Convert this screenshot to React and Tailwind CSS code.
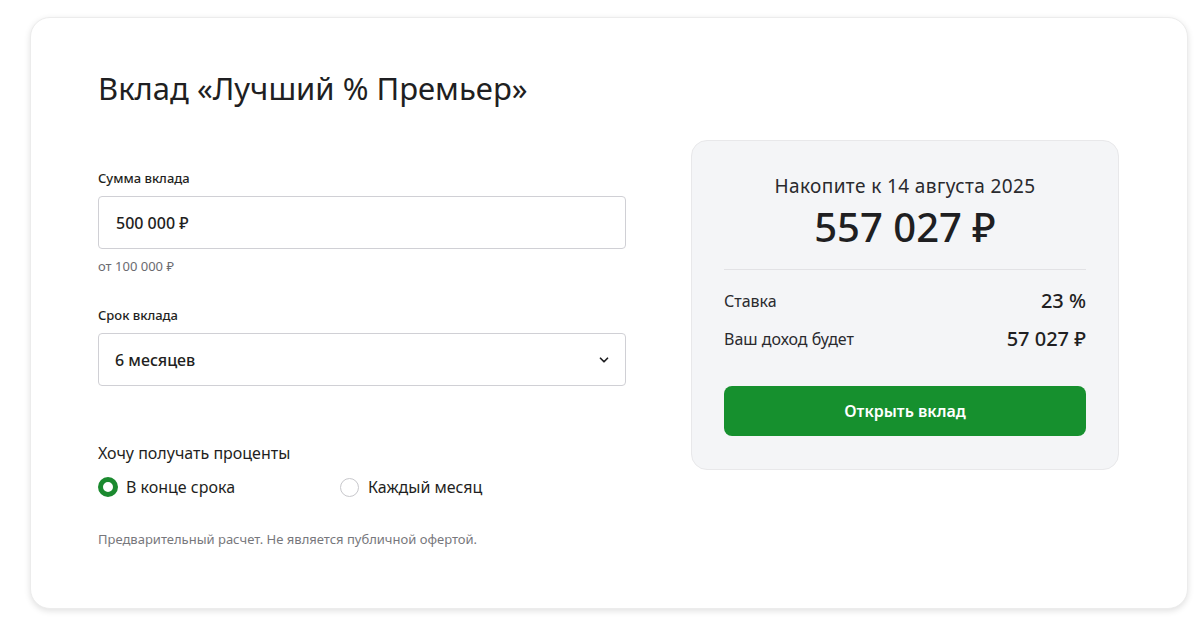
import React from "react";

export default function App() {
  return (
    <div
      className="min-h-screen bg-white pt-[17px] pl-[30px] pr-[12px] pb-[12px] text-[#1f1f22]"
      style={{ fontFamily: '"Noto Sans", "Open Sans", sans-serif' }}
    >
      <div className="rounded-[20px] border border-[#ececec] bg-white shadow-[0_2px_6px_rgba(0,0,0,0.12)] h-[592px] pl-[67px] pr-[68px] pt-[50px]">
        <h1 className="text-[31px] leading-[40px] font-normal">Вклад «Лучший % Премьер»</h1>

        <div className="flex justify-between mt-[61px]">
          <div className="w-[528px]">
            <div className="text-[13px] leading-[18px] font-medium">Сумма вклада</div>
            <div className="mt-[9px] h-[53px] border border-[#d0d0d5] rounded-[4px] flex items-center px-[17px] text-[16px] font-medium">
              500 000 ₽
            </div>
            <div className="mt-[9px] text-[13px] leading-[16px] text-[#6b6b70]">от 100 000 ₽</div>

            <div className="mt-[32px] text-[13px] leading-[18px] font-medium">Срок вклада</div>
            <div className="mt-[9px] h-[53px] border border-[#d0d0d5] rounded-[4px] flex items-center justify-between pl-[16px] pr-[14px] text-[16px] font-medium">
              <span>6 месяцев</span>
              <svg width="14" height="14" viewBox="0 0 24 24" fill="none" stroke="#1f1f22" strokeWidth="3" strokeLinecap="round" strokeLinejoin="round">
                <path d="M6 9l6 6 6-6" />
              </svg>
            </div>

            <div className="mt-[56px] text-[16px] leading-[22px]">Хочу получать проценты</div>
            <div className="mt-[11px] flex items-center">
              <div className="flex items-center w-[242px]">
                <span className="w-[20px] h-[20px] rounded-full border-[5px] border-[#1b8a2f] bg-white" />
                <span className="ml-[8px] text-[16px]">В конце срока</span>
              </div>
              <div className="flex items-center">
                <span className="w-[19px] h-[19px] rounded-full border border-[#c8c8cc] bg-white" />
                <span className="ml-[9px] text-[16px]">Каждый месяц</span>
              </div>
            </div>

            <div className="mt-[32px] text-[13px] leading-[16px] text-[#77777c]">
              Предварительный расчет. Не является публичной офертой.
            </div>
          </div>

          <div className="w-[428px] h-[330px] -mt-[29px] rounded-[16px] bg-[#f4f5f7] border border-[#e8e8ea] px-[32px] pt-[33px]">
            <div className="text-center text-[19px] leading-[24px] tracking-[0.4px] text-[#2a2a2e]">Накопите к 14 августа 2025</div>
            <div className="text-center text-[40px] leading-[48px] font-medium mt-[5px]">557 027 ₽</div>
            <div className="mt-[18px] border-t border-[#e2e2e5]" />
            <div className="mt-[16px] flex justify-between items-center">
              <span className="text-[16px] text-[#2a2a2e]">Ставка</span>
              <span className="text-[20px] font-medium">23 %</span>
            </div>
            <div className="mt-[8px] flex justify-between items-center">
              <span className="text-[16px] text-[#2a2a2e]">Ваш доход будет</span>
              <span className="text-[20px] font-medium">57 027 ₽</span>
            </div>
            <button className="mt-[32px] w-full h-[50px] rounded-[8px] bg-[#16902e] text-white text-[16px] font-semibold">
              Открыть вклад
            </button>
          </div>
        </div>
      </div>
    </div>
  );
}
